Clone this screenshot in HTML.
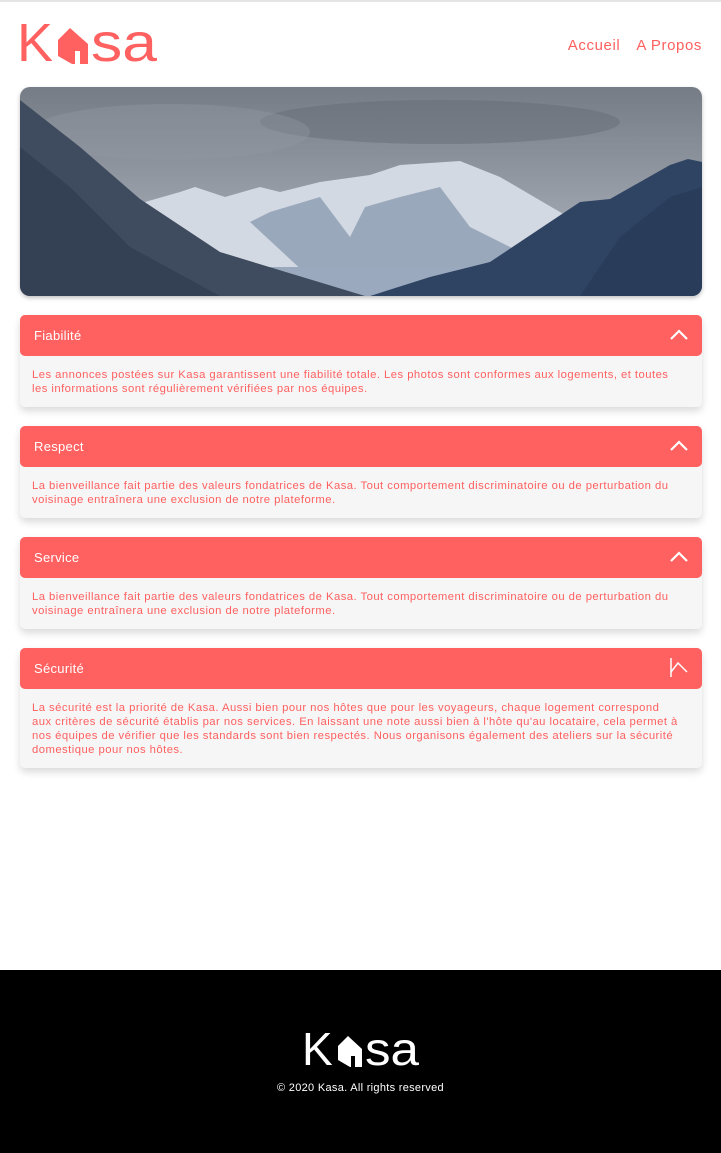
<!DOCTYPE html>
<html><head><meta charset="utf-8"><style>
*{margin:0;padding:0;box-sizing:border-box}
body{width:721px;height:1153px;background:#fff;font-family:"Liberation Sans",sans-serif;position:relative;overflow:hidden}
.topline{position:absolute;top:0;left:0;width:721px;height:2px;background:#e4e4e4}
.nav{position:absolute;top:37px;right:19px;font-size:15px;color:#ff6060;letter-spacing:.6px}
.nav span{margin-left:16px}
.banner{position:absolute;left:20px;top:87px;width:682px;height:209px;border-radius:10px;overflow:hidden;box-shadow:0 2px 4px rgba(0,0,0,.25)}
.acc{position:absolute;left:20px;width:682px;border-radius:5px;background:#f6f6f6;box-shadow:0 4px 8px rgba(0,0,0,.15)}
.acc .h{height:41px;background:#ff6060;border-radius:5px;color:#fff;font-size:13px;line-height:41px;padding-left:14px;position:relative;letter-spacing:.3px}
.acc .h svg{position:absolute;right:14px;top:13px}
.acc .b{color:#ff6060;font-size:11.3px;line-height:14px;padding:12px 24px 11px 12px;letter-spacing:.45px}
.footer{position:absolute;left:0;top:970px;width:721px;height:183px;background:#000}
.copy{position:absolute;top:112px;width:100%;text-align:center;color:#fff;font-size:11px;letter-spacing:.3px}
</style></head><body>
<div class="topline"></div>
<svg style="position:absolute;left:14px;top:14px" width="150" height="56" viewBox="0 0 150 56">
<text x="3" y="47" font-family="Liberation Sans" font-size="54" fill="#ff6060">K</text>
<polygon points="44,26 56,14 74,30 74,50 58,50 44,42" fill="#ff6060"/>
<rect x="61" y="37" width="5" height="13" fill="#fff"/>
<text x="77" y="47" font-family="Liberation Sans" font-size="54" fill="#ff6060" textLength="66" lengthAdjust="spacingAndGlyphs">sa</text>
</svg>
<div class="nav"><span>Accueil</span><span>A Propos</span></div>
<div class="banner">
<svg width="682" height="209" viewBox="0 0 682 209">
<defs><linearGradient id="sky" x1="0" y1="0" x2="0" y2="1"><stop offset="0" stop-color="#767c85"/><stop offset="1" stop-color="#b4bbc6"/></linearGradient></defs>
<rect width="682" height="209" fill="url(#sky)"/>
<ellipse cx="420" cy="35" rx="180" ry="22" fill="#646b75" opacity=".5"/>
<ellipse cx="150" cy="45" rx="140" ry="28" fill="#9299a3" opacity=".4"/>
<polygon points="125,115 160,105 175,100 205,110 240,100 260,105 300,95 350,88 380,78 440,74 480,90 545,128 560,209 200,209" fill="#d3d9e3"/>
<polygon points="230,135 250,125 300,110 330,150 345,120 380,110 420,100 450,140 500,165 470,200 300,200" fill="#8193ab" opacity=".7"/>
<rect x="250" y="180" width="320" height="29" fill="#9aa9bd"/>
<polygon points="0,13 60,60 120,112 200,165 345,209 0,209" fill="#3f4b5e"/>
<polygon points="0,60 50,100 110,160 200,209 0,209" fill="#303c50" opacity=".7"/>
<polygon points="350,209 410,190 470,175 560,115 590,112 650,78 668,72 682,75 682,209" fill="#2f4463"/>
<polygon points="560,209 600,150 650,110 682,100 682,209" fill="#263a59" opacity=".7"/>
</svg>
</div>

<div class="acc" style="top:315px"><div class="h">Fiabilité<svg width="18" height="12" viewBox="0 0 18 12"><polyline points="1,11 9,3 17,11" fill="none" stroke="#fff" stroke-width="2.2"/></svg></div>
<div class="b">Les annonces postées sur Kasa garantissent une fiabilité totale. Les photos sont conformes aux logements, et toutes les informations sont régulièrement vérifiées par nos équipes.</div></div>

<div class="acc" style="top:426px"><div class="h">Respect<svg width="18" height="12" viewBox="0 0 18 12"><polyline points="1,11 9,3 17,11" fill="none" stroke="#fff" stroke-width="2.2"/></svg></div>
<div class="b">La bienveillance fait partie des valeurs fondatrices de Kasa. Tout comportement discriminatoire ou de perturbation du voisinage entraînera une exclusion de notre plateforme.</div></div>

<div class="acc" style="top:537px"><div class="h">Service<svg width="18" height="12" viewBox="0 0 18 12"><polyline points="1,11 9,3 17,11" fill="none" stroke="#fff" stroke-width="2.2"/></svg></div>
<div class="b">La bienveillance fait partie des valeurs fondatrices de Kasa. Tout comportement discriminatoire ou de perturbation du voisinage entraînera une exclusion de notre plateforme.</div></div>

<div class="acc" style="top:648px"><div class="h">Sécurité<svg width="18" height="20" viewBox="0 0 18 20" style="top:10px"><polyline points="1,0 1,19" fill="none" stroke="#fff" stroke-width="1.5"/><polyline points="1,14 8,5 17,14" fill="none" stroke="#fff" stroke-width="1.5"/></svg></div>
<div class="b">La sécurité est la priorité de Kasa. Aussi bien pour nos hôtes que pour les voyageurs, chaque logement correspond aux critères de sécurité établis par nos services. En laissant une note aussi bien à l'hôte qu'au locataire, cela permet à nos équipes de vérifier que les standards sont bien respectés. Nous organisons également des ateliers sur la sécurité domestique pour nos hôtes.</div></div>

<div class="footer">
<svg style="position:absolute;left:298px;top:54px" width="126" height="48" viewBox="0 0 126 48">
<text x="4" y="41" font-family="Liberation Sans" font-size="46" fill="#fff">K</text>
<polygon points="40,22 50,12 64,25 64,43 52,43 40,36" fill="#fff"/>
<rect x="53" y="32" width="4" height="11" fill="#000"/>
<text x="67" y="41" font-family="Liberation Sans" font-size="46" fill="#fff" textLength="54" lengthAdjust="spacingAndGlyphs">sa</text>
</svg>
<div class="copy">© 2020 Kasa. All rights reserved</div>
</div>
</body></html>
